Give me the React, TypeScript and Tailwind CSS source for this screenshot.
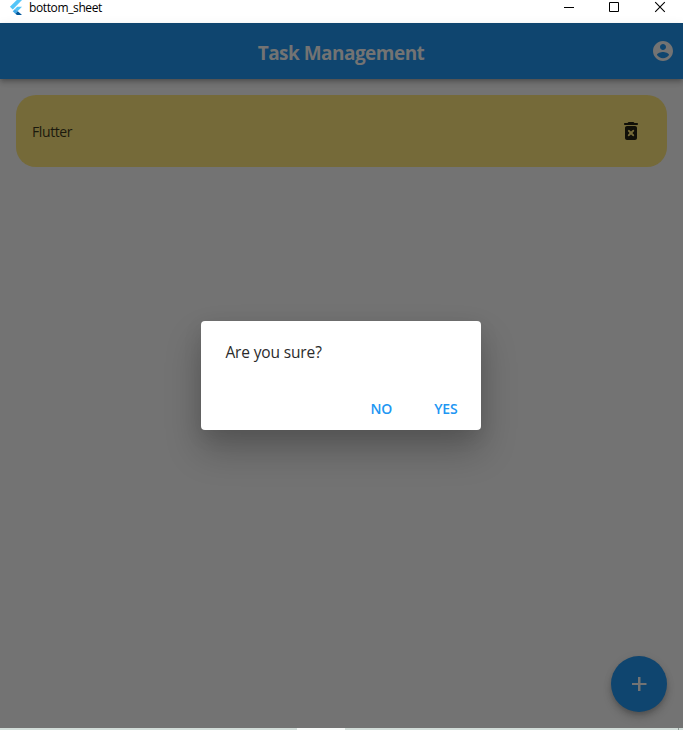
import React from "react";

function TitleBar() {
  return (
    <header className="flex h-[23px] shrink-0 items-start bg-white">
      <svg className="ml-2 h-4 w-4" viewBox="0 0 16 16">
        <path d="M8.8 0H14L4.8 9.4L1.9 6.8Z" fill="#54c5f8" />
        <path d="M9.2 6.8H14L9.6 11.2L7 8.9Z" fill="#54c5f8" />
        <path d="M7 8.9L9.8 11.3L7.3 13.7L4.7 11.3Z" fill="#40a9e8" />
        <path d="M7.3 13.7L9.8 11.3L14 15H9Z" fill="#01579b" />
      </svg>
      <span className="ml-[5px] mt-px text-[12px] leading-[14px] tracking-[-0.38px] text-black">
        bottom_sheet
      </span>
      <svg className="ml-auto h-[15px] w-[123px]" viewBox="0 0 123 15" fill="none" stroke="#000">
        <path d="M4 7.5H14" />
        <path d="M49.5 2.5H58.5V11.5H49.5Z" />
        <path d="M95.2 2.2L104.8 11.8M104.8 2.2L95.2 11.8" strokeWidth="1.1" />
      </svg>
    </header>
  );
}

function AppBar() {
  return (
    <div className="relative z-10 flex h-14 shrink-0 items-center bg-[#0f456f] pr-2 shadow-[0_2px_4px_-1px_rgba(0,0,0,0.2),0_4px_5px_rgba(0,0,0,0.14),0_1px_10px_rgba(0,0,0,0.06)]">
      <h1 className="ml-[31px] flex-1 pt-[3px] text-center text-[19px] font-bold leading-7 tracking-[-0.53px] text-[#737373]">
        Task Management
      </h1>
      <svg className="h-6 w-6 shrink-0" viewBox="0 0 24 24" fill="#737373">
        <path d="M12 2C6.48 2 2 6.48 2 12s4.48 10 10 10 10-4.48 10-10S17.52 2 12 2zm0 3c1.66 0 3 1.34 3 3s-1.34 3-3 3-3-1.34-3-3 1.34-3 3-3zm0 14.2c-2.5 0-4.71-1.28-6-3.22.03-1.99 4-3.08 6-3.08 1.99 0 5.97 1.09 6 3.08-1.29 1.94-3.5 3.22-6 3.22z" />
      </svg>
    </div>
  );
}

function Task({ name }: { name: string }) {
  return (
    <div className="mx-4 mt-4 flex h-[72px] items-center justify-between rounded-[20px] bg-[#756a39] pl-4 pr-6">
      <span className="pt-0.5 text-[14px] leading-5 tracking-[-0.4px] text-[#1b190d]">{name}</span>
      <svg className="h-6 w-6" viewBox="0 0 24 24" fill="#100f08">
        <path d="M6 19c0 1.1.9 2 2 2h8c1.1 0 2-.9 2-2V9c0-1.1-.9-2-2-2H8c-1.1 0-2 .9-2 2v10zm3.17-7.83a1 1 0 0 1 1.41 0L12 12.59l1.42-1.42a1 1 0 1 1 1.41 1.41L13.41 14l1.42 1.42a1 1 0 1 1-1.41 1.41L12 15.41l-1.42 1.42a1 1 0 1 1-1.41-1.41L10.59 14l-1.42-1.42a1 1 0 0 1 0-1.41zM15.5 4l-.71-.71A1 1 0 0 0 14.09 3H9.91a1 1 0 0 0-.7.29L8.5 4H6c-.55 0-1 .45-1 1s.45 1 1 1h12c.55 0 1-.45 1-1s-.45-1-1-1h-2.5z" />
      </svg>
    </div>
  );
}

function Dialog() {
  return (
    <div className="absolute left-[201.4px] top-[321px] z-20 flex h-[109px] w-[280px] flex-col justify-between rounded bg-white px-6 shadow-[0_20px_36px_0px_rgba(0,0,0,0.24),0_6px_20px_0px_rgba(0,0,0,0.08)]">
      <p className="pt-[19px] text-[15.5px] leading-6 tracking-[-0.14px] text-[#2b2b2b]">Are you sure?</p>
      <div className="flex justify-end gap-[42px] pb-[11px] text-[14px] font-semibold leading-5 tracking-[-0.2px] text-[#2196f3]">
        <button>NO</button>
        <button>YES</button>
      </div>
    </div>
  );
}

export default function App() {
  return (
    <div className="relative flex h-[730px] w-[683px] flex-col overflow-hidden bg-[#737373] font-['Open_Sans','Noto_Sans',sans-serif]">
      <TitleBar />
      <AppBar />
      <main className="flex-1">
        <Task name="Flutter" />
      </main>
      <button className="absolute left-[611px] top-[656px] flex h-14 w-14 items-center justify-center rounded-full bg-[#0f456f] shadow-[0_3px_5px_-1px_rgba(0,0,0,0.2),0_6px_10px_rgba(0,0,0,0.14),0_1px_12px_rgba(0,0,0,0.04)]">
        <svg className="h-6 w-6" viewBox="0 0 24 24" fill="#737373">
          <path d="M19.5 13.1H13.5V19H11V13.1H5V11H11V5H13.5V11H19.5Z" />
        </svg>
      </button>
      <footer className="flex h-0.5 shrink-0 bg-[#d2ddd9]">
        <div className="ml-[297px] w-12 bg-[#f7faf9]" />
        <div className="ml-[333px] w-px bg-[#8e9a96]" />
      </footer>
      <Dialog />
    </div>
  );
}
